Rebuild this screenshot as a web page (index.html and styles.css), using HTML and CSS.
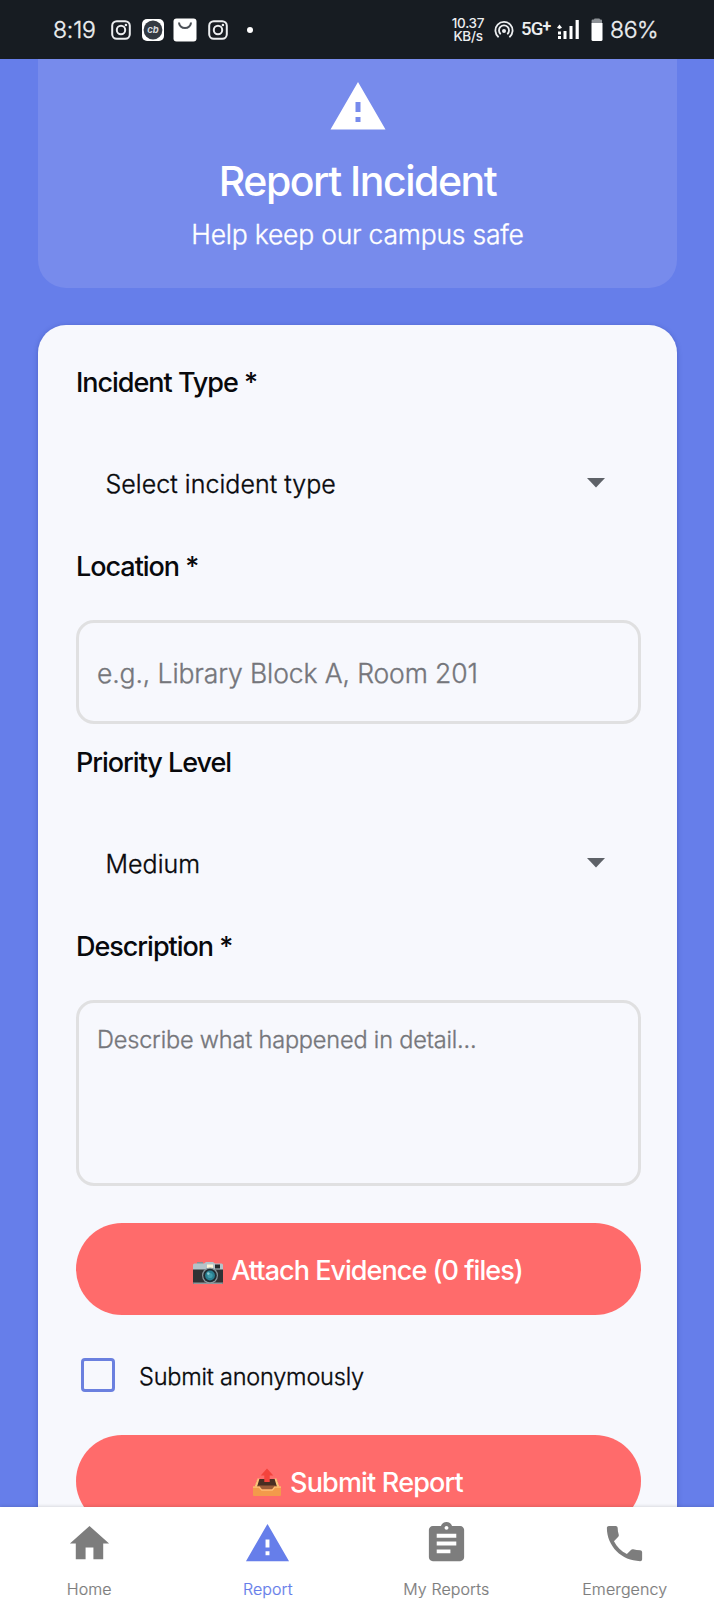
FILE: index.html
```html
<!DOCTYPE html>
<html lang="en">
<head>
<meta charset="utf-8">
<title>Report Incident</title>
<link rel="stylesheet" href="styles.css">
</head>
<body>
<div class="phone">
  <header class="status">
    <div class="status-left">
      <span class="clock">8:19</span>
      <svg class="ic-insta" viewBox="0 0 20 20"><rect x="1.2" y="1.2" width="17.6" height="17.6" rx="4.6"/><circle cx="10" cy="10" r="4.2"/><circle class="fill" cx="14.9" cy="5" r="1.3"/></svg>
      <svg class="ic-cb" viewBox="0 0 22 22"><rect width="22" height="22" rx="5" fill="#fff"/><circle cx="11" cy="11" r="9.4" fill="#343a42"/><text x="11" y="14.2" text-anchor="middle">cb</text></svg>
      <svg class="ic-bag" viewBox="0 0 24 24"><rect x=".5" y=".5" width="23" height="23" rx="3" fill="#fff"/><path d="M6 4.5a6 5.6 0 0 0 12 0" fill="none" stroke="#4c5157" stroke-width="2"/></svg>
      <svg class="ic-insta" viewBox="0 0 20 20"><rect x="1.2" y="1.2" width="17.6" height="17.6" rx="4.6"/><circle cx="10" cy="10" r="4.2"/><circle class="fill" cx="14.9" cy="5" r="1.3"/></svg>
      <span class="dot"></span>
    </div>
    <div class="status-right">
      <div class="speed"><span>10.37</span><span>KB/s</span></div>
      <svg class="ic-hotspot" viewBox="0 0 20 18"><path d="M4.6 16.2a8.6 8.6 0 1 1 10.8 0M6.7 13.2a5 5 0 1 1 6.6 0"/><circle cx="10" cy="10" r="2"/></svg>
      <span class="net">5G<b>+</b></span>
      <svg class="ic-signal" viewBox="0 0 23 20"><path d="M6.500 11h3v8h-3zM12.500 6h3v13h-3zM18.600 0h3.200v19h-3.200zM1 11.500h3v3H1zM1 16h3v3H1zM0 7.800 2.500 4.500 5 7.800 2.500 9z"/></svg>
      <svg class="ic-battery" viewBox="0 0 12 24"><path d="M3 1.500Q3 .5 4 .5h4q1 0 1 1H10q1 0 1 1V5H.6V2.500q0-1 1-1z" fill="#8d9196"/><path d="M.5 5h11v16.500q0 1.500-1.500 1.500H2Q.5 23 .5 21.500z" fill="#fff"/></svg>
      <span class="percent">86%</span>
    </div>
  </header>

  <main class="screen">
    <section class="hero">
      <svg class="hero-icon" viewBox="0 0 24 24"><path d="M1 21h22L12 2 1 21zm12-3h-2v-2h2v2zm0-4h-2v-4h2v4z"/></svg>
      <h1 class="hero-title">Report Incident</h1>
      <p class="hero-sub">Help keep our campus safe</p>
    </section>

    <form class="card">
      <div class="label">Incident Type *</div>
      <div class="select"><span>Select incident type</span><svg class="caret" viewBox="0 0 18 10"><path d="M0 0h18L9 9.500z"/></svg></div>
      <div class="label">Location *</div>
      <div class="field field-line"><span>e.g., Library Block A, Room 201</span></div>
      <div class="label">Priority Level</div>
      <div class="select"><span>Medium</span><svg class="caret" viewBox="0 0 18 10"><path d="M0 0h18L9 9.500z"/></svg></div>
      <div class="label">Description *</div>
      <div class="field field-area"><span>Describe what happened in detail...</span></div>

      <div class="btn btn-attach">
        <svg class="ic-camera" viewBox="0 0 30 24">
          <path d="M4 1h6v2H4z" fill="#8b9093"/>
          <path d="M0 4q0-1.500 1.500-1.500H11L13 1h7l2 1.500h6.500Q30 2.500 30 4v5H0z" fill="#b4c3c9"/>
          <path d="M0 8.500h30V22q0 1-1 1H1q-1 0-1-1z" fill="#303235"/>
          <path d="M0 21.500h30V22q0 1-1 1H1q-1 0-1-1z" fill="#8e979b"/>
          <rect x="14" y="3.500" width="6" height="3.500" fill="#fff6d8"/>
          <rect x="22" y="3.500" width="5" height="4" fill="#272a2d"/>
          <circle cx="17" cy="14.500" r="8" fill="#8b989d"/>
          <circle cx="17" cy="14.500" r="6.800" fill="#202b32"/>
          <circle cx="17" cy="14.500" r="4.900" fill="#297f91"/>
          <circle cx="17" cy="14.500" r="2.600" fill="#3f9cab"/>
          <circle cx="15.300" cy="12.600" r="1.300" fill="#90cbd2"/>
        </svg>
        <span>Attach Evidence (0 files)</span>
      </div>

      <div class="check"><span class="box"></span><span class="check-text">Submit anonymously</span></div>

      <div class="btn btn-submit">
        <svg class="ic-outbox" viewBox="0 0 28 28">
          <path d="M4.500 11h19L26 19H2z" fill="#4a2d22"/>
          <path d="M4.500 10.500h2L4 19H1.500zM21.500 10.500h2l3 8.500H24z" fill="#ffc27a"/>
          <path d="M5 17.500h18l-3 4H8z" fill="#9b5b38"/>
          <path d="M0 18.500h6.500L9 21.500h10l2.500-3H28V27q0 1-1 1H1q-1 0-1-1z" fill="#f39a4b"/>
          <path d="M0 18.500h6.500L9 21.500h10l2.500-3H28v1.200h-5.900l-2.600 3h-11l-2.600-3H0z" fill="#ffbe75"/>
          <path d="M14 .5 20.300 7.500h-3.600V14h-5.400V7.500H7.700z" fill="#f4433c"/>
        </svg>
        <span>Submit Report</span>
      </div>
    </form>
  </main>

  <nav class="tabs">
    <div class="tab"><svg viewBox="0 0 24 24"><path d="M10 20v-6h4v6h5v-8h3L12 3 2 12h3v8z"/></svg><span>Home</span></div>
    <div class="tab active"><svg viewBox="0 0 24 24"><path d="M1 21h22L12 2 1 21zm12-3h-2v-2h2v2zm0-4h-2v-4h2v4z"/></svg><span>Report</span></div>
    <div class="tab"><svg viewBox="0 0 24 24"><path d="M19 3h-4.180C14.400 1.840 13.300 1 12 1c-1.300 0-2.400.84-2.820 2H5c-1.100 0-2 .9-2 2v14c0 1.100.9 2 2 2h14c1.100 0 2-.9 2-2V5c0-1.100-.9-2-2-2zm-7 0c.55 0 1 .45 1 1s-.45 1-1 1-1-.45-1-1 .45-1 1-1zm2 14H7v-2h7v2zm3-4H7v-2h10v2zm0-4H7V7h10v2z"/></svg><span>My Reports</span></div>
    <div class="tab"><svg viewBox="0 0 24 24"><path d="M6.620 10.790c1.440 2.830 3.760 5.140 6.590 6.590l2.200-2.200c.27-.27.67-.36 1.020-.24 1.120.37 2.330.57 3.570.57.55 0 1 .45 1 1V20c0 .55-.45 1-1 1-9.390 0-17-7.610-17-17 0-.55.45-1 1-1h3.500c.55 0 1 .45 1 1 0 1.250.2 2.450.57 3.570.11.35.03.74-.25 1.020l-2.200 2.200z"/></svg><span>Emergency</span></div>
  </nav>
</div>
</body>
</html>
```

FILE: styles.css
```css
* { box-sizing: border-box; }
body { margin: 0; font-family: Inter, Roboto, sans-serif; }
svg { display: block; flex: none; }
span, h1, p { white-space: nowrap; }

.phone {
  width: 714px;
  height: 1599px;
  display: flex;
  flex-direction: column;
  overflow: hidden;
  background: #667eea;
}

/* status bar */
.status {
  flex: none;
  height: 59px;
  padding: 0 56px 0 53px;
  display: flex;
  justify-content: space-between;
  align-items: center;
  background: #171c22;
  color: #eceef0;
}
.status-left, .status-right { display: flex; align-items: center; }
.clock, .percent, .hero-sub, .select, .field, .check-text { font-weight: 300; -webkit-text-stroke: .35px currentColor; }
.clock { width: 43px; font-size: 23px; line-height: 30px; letter-spacing: -.2px; }
.ic-insta { width: 20px; height: 20px; margin-left: 14.500px; fill: none; stroke: #eceef0; stroke-width: 2; }
.ic-insta .fill { fill: #eceef0; stroke: none; }
.ic-cb { width: 22px; height: 22px; margin-left: 11.500px; }
.ic-cb text { font: italic 700 9.500px Inter, sans-serif; fill: #d8dadd; }
.ic-bag { width: 24px; height: 24px; margin-left: 9px; }
.ic-bag + .ic-insta { margin-left: 11px; }
.dot { width: 6px; height: 6px; margin-left: 19px; border-radius: 50%; background: #fff; }
.speed { width: 33px; display: flex; flex-direction: column; align-items: center; font-size: 13.500px; font-weight: 500; line-height: 13px; letter-spacing: -.3px; }
.ic-hotspot { width: 20px; height: 18px; margin-left: 9.500px; fill: none; stroke: #eceef0; stroke-width: 1.800; }
.ic-hotspot circle { fill: #eceef0; stroke: none; }
.net { width: 29px; margin-left: 7px; font: 500 18.500px/24px Roboto, sans-serif; letter-spacing: -.8px; }
.net b { font-size: 16px; position: relative; top: -3px; }
.ic-signal { width: 23px; height: 20px; margin-left: 7px; fill: #fff; }
.ic-battery { width: 12px; height: 24px; margin-left: 11px; }
.percent { width: 48px; margin-left: 7px; font-size: 23px; line-height: 30px; letter-spacing: -.4px; }

/* scrolled content */
.screen { flex: 1; min-height: 0; padding: 0 37px 0 38px; overflow: hidden; }
.hero {
  height: 229px;
  padding-top: 17.500px;
  display: flex;
  flex-direction: column;
  align-items: center;
  border-radius: 0 0 28px 28px;
  background: #778bec;
  color: #fff;
}
.hero-icon { width: 60px; height: 60px; fill: #fff; }
.hero-title { margin: 19.500px 0 0; font-size: 41px; font-weight: 500; line-height: 50px; letter-spacing: -1.480px; }
.hero-sub { margin: 10px 0 0; font-size: 26.500px; line-height: 36px; letter-spacing: -.22px; }

.card {
  height: 1300px;
  margin-top: 37px;
  padding: 40px 36.500px 0 37.500px;
  border-radius: 28px 28px 0 0;
  background: #f7f8fd;
  box-shadow: 0 1px 5px rgba(30, 45, 130, .35);
  color: #08090c;
}
.label { padding-left: .5px; font-size: 27px; font-weight: 500; line-height: 36px; letter-spacing: -1.030px; }
.select { height: 128px; margin: 19px 0 1px; padding: 0 36px 0 30px; display: flex; align-items: center; justify-content: space-between; font-size: 25px; letter-spacing: .04px; }
.caret { width: 18px; height: 10px; margin-bottom: 2px; fill: #5e6268; }
.field { margin-top: 35px; border: 3px solid #e0e0e1; border-radius: 18px; padding: 0 18.500px; display: flex; color: #75767b; }
.field-line { height: 103.500px; margin-bottom: 21.500px; align-items: center; font-size: 26.500px; padding-top: 3px; letter-spacing: -.11px; }
.field-area { height: 186px; padding-top: 21px; font-size: 23.500px; line-height: 32px; letter-spacing: -.17px; }

.btn { height: 92px; padding-top: 3px; display: flex; align-items: center; justify-content: center; border-radius: 46px; background: #ff6b6b; color: #fff; font-size: 27px; font-weight: 500; letter-spacing: -.960px; }
.btn-attach { margin-top: 37px; }
.btn-submit { letter-spacing: -.82px; }
.ic-camera { width: 30px; height: 24px; margin: 4px 8px 0 0; }
.ic-outbox { width: 28px; height: 28px; margin: 0 9px 2px 0; }
.check { height: 120px; padding-left: 5.500px; display: flex; align-items: center; font-size: 23.500px; letter-spacing: -.21px; }
.check-text { padding-top: 3px; }
.box { width: 34px; height: 34px; margin-right: 24px; border: 3px solid #6b80df; border-radius: 4px; }

/* bottom tabs */
.tabs {
  flex: none;
  height: 92px;
  padding-top: 12.500px;
  display: grid;
  grid-template-columns: repeat(4, 1fr);
  background: #fff;
  box-shadow: 0 -1px 3px rgba(0, 0, 0, .12);
  position: relative;
}
.tab { display: flex; flex-direction: column; align-items: center; color: #7d7d7d; font-size: 16px; font-weight: 300; letter-spacing: .1px; -webkit-text-stroke: .2px currentColor; }
.tab svg { width: 47px; height: 47px; fill: #7d7d7d; }
.tab span { margin-top: 12px; line-height: 20px; }
.tab.active { color: #667eea; }
.tab.active svg { fill: #667eea; }
```
